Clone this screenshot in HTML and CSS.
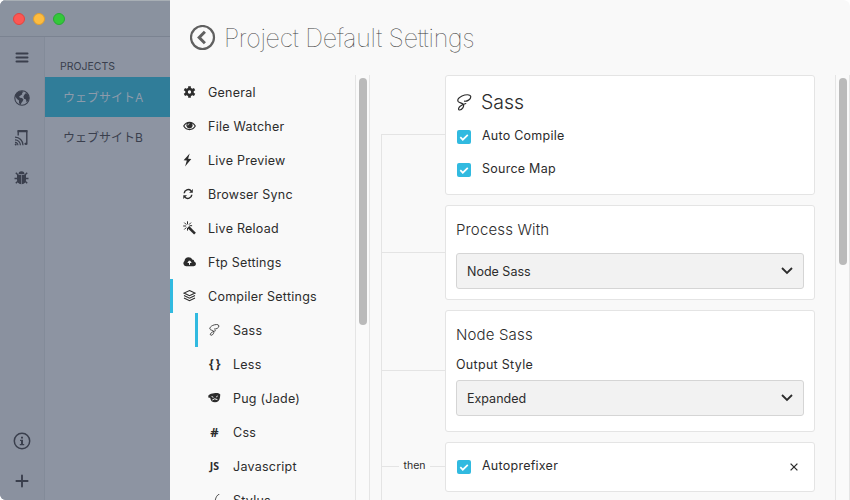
FILE: index.html
```html
<!DOCTYPE html>
<html lang="en">
<head>
<meta charset="utf-8">
<title>Project Default Settings</title>
<link rel="stylesheet" href="styles.css">
</head>
<body>
<svg class="defs" width="0" height="0">
  <symbol id="sass" viewBox="0 0 15 17"><path d="M7.500 7.200C10 7.500 13.800 5.500 13.800 2.800 13.500-.2 8 .6 5 2 2 3.500.3 5.500 1 7.200c.8 1.600 4 1.600 5.300 3.100C7.500 12.300 5 16 2.800 16 .8 16 1.500 13.300 3.500 12c1.500-1.100 3-1.700 5.300-2.500" fill="none" stroke="currentColor" stroke-width="1.200" stroke-linecap="round"/></symbol>
  <symbol id="chev" viewBox="0 0 12 8"><path d="M1 1l5 5 5-5" fill="none" stroke="currentColor" stroke-width="1.800"/></symbol>
  <symbol id="tick" viewBox="0 0 14 14"><path d="M3.300 7.200l2.500 2.500 5-4.800" fill="none" stroke="currentColor" stroke-width="1.700"/></symbol>
</svg>
<div class="window">
  <aside class="app">
    <div class="titlebar"><i class="dot red"></i><i class="dot yellow"></i><i class="dot green"></i></div>
    <div class="app-body">
      <div class="rail">
        <svg width="16" height="16" viewBox="0 0 16 16"><path d="M2.500 3.500h11M2.500 7.500h11M2.500 11.500h11" stroke="currentColor" stroke-width="2" stroke-linecap="round"/></svg>
        <svg width="16" height="16" viewBox="0 0 16 16"><circle cx="8" cy="8" r="7.200" fill="none" stroke="currentColor" stroke-width="1.100"/><path d="M1 6C2 3 4.500 1 8 .9L9.500 2 8 3l.3 1.200L6.500 5.500 5 6.700l1 1 2 .3 1.500 1.500-1 2-1 1.300L6.500 15 5 13V10.500L3 9zM10.500 4.500L12 3l2 1.500L15.200 8l-1 3-1.700 1.200-.5-2.700-2-.8-.6-2.200z" fill="currentColor"/></svg>
        <svg width="16" height="16" viewBox="0 0 16 16"><path d="M4.200 5.500V1.200h8.600v12.600H10.500" fill="none" stroke="currentColor" stroke-width="1.400"/><path d="M3.600 1.100h9.800M11 13.700h2" stroke="currentColor" stroke-width="2.100"/><path d="M1 7.200a8 8 0 0 1 8 8M1 9.800a5.400 5.400 0 0 1 5.400 5.400M1 12.300a2.800 2.800 0 0 1 2.900 2.900" fill="none" stroke="currentColor" stroke-width="1.200"/><circle cx="1.700" cy="14.600" r="1" fill="currentColor"/></svg>
        <svg width="16" height="16" viewBox="0 0 16 16"><path d="M4.500 4.300a3 3 0 0 1 6 0z" fill="currentColor"/><path d="M3 5H7.200v9.200C4.300 13.900 3 12 3 9.500zM7.800 5H12v4.500c0 2.500-1.300 4.400-4.200 4.700z" fill="currentColor"/><path d="M1.800 2.800L4.500 5.500M.5 8.500h3M1.800 13.300L4.300 10.800M13.200 2.800L10.500 5.500M14.500 8.500h-3M13.200 13.300L10.700 10.800" stroke="currentColor" stroke-width="1.400"/></svg>
        <span class="push"></span>
        <svg width="18" height="18" viewBox="0 0 18 18"><circle cx="9" cy="9" r="7.700" fill="none" stroke="currentColor" stroke-width="1.500"/><path d="M8 4.700h2v1.800H8zM7 7.800h3v4.300h1.200v1.200H6.800v-1.200H8V9H7z" fill="currentColor"/></svg>
        <svg width="14" height="14" viewBox="0 0 14 14"><path d="M7 1.400v11.200M1.400 7h11.200" stroke="currentColor" stroke-width="1.900" stroke-linecap="round"/></svg>
      </div>
      <div class="projects">
        <h2>PROJECTS</h2>
        <div class="project on">ウェブサイトA</div>
        <div class="project">ウェブサイトB</div>
      </div>
    </div>
  </aside>
  <main class="panel">
    <header>
      <svg width="26" height="26" viewBox="0 0 26 26"><circle cx="12.500" cy="12.500" r="11.500" fill="none" stroke="currentColor" stroke-width="2.200"/><path d="M14.900 6.800L9.200 12.500l5.700 5.700" fill="none" stroke="currentColor" stroke-width="3"/></svg>
      <h1>Project Default Settings</h1>
    </header>
    <div class="cols">
      <nav>
        <a><svg width="13" height="14" viewBox="0 0 14 14"><circle cx="7" cy="7" r="3.200" fill="none" stroke="currentColor" stroke-width="2.800"/><path d="M7 .7v2.500M7 10.800v2.500M1.500 3.900l2.200 1.200M10.300 8.900l2.200 1.200M1.500 10.100l2.200-1.200M10.300 5.100l2.200-1.200" stroke="currentColor" stroke-width="2.900"/></svg>General</a>
        <a><svg width="13" height="14" viewBox="0 0 14 14"><path d="M.8 7C3.900 1.900 10.100 1.900 13.200 7 10.100 12.100 3.900 12.100.8 7z" fill="none" stroke="currentColor" stroke-width="1.300"/><circle cx="7" cy="6.300" r="3.300" fill="currentColor"/><path d="M5.200 6.300A1.800 1.800 0 0 1 7 4.500" stroke="#f9f9f9" fill="none" stroke-width=".8"/></svg>File Watcher</a>
        <a><svg width="13" height="14" viewBox="0 0 13 14"><path d="M6.700.5L.6 7.300l3.200.3-1.700 5.900L8.300 6l-3.200-.3z" fill="currentColor"/></svg>Live Preview</a>
        <a><svg width="13" height="14" viewBox="0 0 13 14"><path d="M1.200 6.300A4 4 0 0 1 8 3.800M8.800 7.700A4 4 0 0 1 2 10.200" fill="none" stroke="currentColor" stroke-width="1.500"/><path d="M9.800 2v3.700H6.100zM.3 12V8.300H4z" fill="currentColor"/></svg>Browser Sync</a>
        <a><svg width="13" height="14" viewBox="0 0 13 14"><path d="M5.300 6L12 12.700" stroke="currentColor" stroke-width="2.500"/><path d="M4.500.3v3M.2 5h3M1.300 1.600l2 2M8 1.600l-2 2M1.300 8.500l2-2M4.500 7v2.600M6.500 4.700h2.600" stroke="currentColor" stroke-width="1"/></svg>Live Reload</a>
        <a><svg width="13" height="14" viewBox="0 0 13 14"><path d="M3.200 11.300A3 3 0 0 1 1.500 6C1.600 3.700 3.300 2.300 5.500 2.300 7.300 2.300 8.500 3.100 9.200 4.500c1.300 0 2 .9 2 2 2.600.8 2.200 4.800-.7 4.800z" fill="currentColor"/><path d="M6.500 9.800V6.500M4.900 7.500l1.600-1.700 1.600 1.700z" fill="#f9f9f9" stroke="#f9f9f9" stroke-width="1"/></svg>Ftp Settings</a>
        <a class="on"><svg width="13" height="14" viewBox="0 0 13 14"><path d="M6.500 1.500l5.500 2.600-5.500 2.600L1 4.100zM1 6.500l5.500 2.700L12 6.500M1 9l5.500 2.700L12 9" fill="none" stroke="currentColor" stroke-width="1.100"/></svg>Compiler Settings</a>
        <a class="sub on"><svg width="11" height="12"><use href="#sass"/></svg>Sass</a>
        <a class="sub"><b class="glyph braces">{ }</b>Less</a>
        <a class="sub"><svg width="13" height="12" viewBox="0 0 13 12"><path d="M.2 3.800C2 1.300 4 1.800 6 1.300c2-.6 4.500-.6 6.300 1.200L12 5.200c-.5 3.500-2 5-5 5.100-3 0-4.300-1.300-4.800-4.500L.5 5.700z" fill="currentColor"/><path d="M3.600 4.500l1.800.8M9.700 4l-1.500 1M4.300 8l2.400-1.200 2.700.8" stroke="#f9f9f9" stroke-width="1" fill="none"/></svg>Pug (Jade)</a>
        <a class="sub"><b class="glyph hash">#</b>Css</a>
        <a class="sub"><b class="glyph js">JS</b>Javascript</a>
        <a class="sub"><svg width="12" height="12" viewBox="0 0 12 12"><path d="M11 0C8.500 1 7.500 3 6.800 6L5 8 2.500 7 4 9.500" fill="none" stroke="currentColor" stroke-width=".8"/></svg>Stylus</a>
      </nav>
      <div class="scroll"><div class="thumb"></div></div>
      <div class="steps">
        <section class="step">
          <div class="wire"></div>
          <div class="card sass">
            <h3 class="big"><svg width="15" height="17"><use href="#sass"/></svg>Sass</h3>
            <label><span class="check"><svg width="14" height="14"><use href="#tick"/></svg></span>Auto Compile</label>
            <label><span class="check"><svg width="14" height="14"><use href="#tick"/></svg></span>Source Map</label>
          </div>
        </section>
        <section class="step">
          <div class="wire"></div>
          <div class="card process">
            <h3>Process With</h3>
            <div class="select">Node Sass<svg width="12" height="8"><use href="#chev"/></svg></div>
          </div>
        </section>
        <section class="step">
          <div class="wire"></div>
          <div class="card node">
            <h3>Node Sass</h3>
            <p>Output Style</p>
            <div class="select">Expanded<svg width="12" height="8"><use href="#chev"/></svg></div>
          </div>
        </section>
        <section class="step">
          <div class="wire then"><span>then</span></div>
          <div class="card prefixer">
            <label><span class="check"><svg width="14" height="14"><use href="#tick"/></svg></span>Autoprefixer</label>
            <svg width="8" height="8" viewBox="0 0 8 8"><path d="M.6.6l6.800 6.800M7.400.6L.6 7.400" stroke="currentColor" stroke-width="1.300"/></svg>
          </div>
        </section>
      </div>
      <div class="scroll main"><div class="thumb"></div></div>
    </div>
  </main>
</div>
</body>
</html>
```

FILE: styles.css
```css
* { box-sizing: border-box; }
body { margin: 0; background: #fff; font-family: Inter, "Noto Sans CJK JP", sans-serif; color: #2c2c2c; }
h1, h2, h3, p { margin: 0; font-weight: 400; }
svg { display: block; flex: none; }
.defs { position: absolute; }
.window { display: flex; width: 850px; height: 500px; overflow: hidden; border-radius: 6px 6px 0 6px; }
.app { width: 170px; display: flex; flex-direction: column; background: #8d94a2; color: #3a3f4d; }
.titlebar { height: 37px; display: flex; gap: 8px; align-items: center; padding-left: 13px; background: #8a929f; border-top: 1px solid #a8afb5; border-bottom: 1px solid #7b8391; }
.dot { width: 12px; height: 12px; border-radius: 50%; border: 1px solid; }
.red { background: #fc5753; border-color: #e2443f; }
.yellow { background: #fdbc40; border-color: #df9f2f; }
.green { background: #34c83a; border-color: #27aa35; }
.app-body { flex: 1; display: flex; min-height: 0; }
.rail { width: 45px; display: flex; flex-direction: column; align-items: center; gap: 24px; padding: 12.5px 0 12.5px; background: #8a919f; border-right: 1px solid #838b99; }
.rail svg { margin-left: .5px; }
.push { flex: 1; }
.projects { flex: 1; }
.projects h2 { height: 40px; padding: 22px 0 0 15px; font-size: 10.5px; line-height: 16px; letter-spacing: 0; }
.project { height: 40px; padding-left: 18px; font-size: 12px; line-height: 41px; white-space: nowrap; }
.project.on { background: #307d99; color: #8d9bab; }
.panel { flex: 1; display: flex; flex-direction: column; background: #f9f9f9; border-top-right-radius: 6px; min-width: 0; }
header { height: 75px; display: flex; align-items: center; gap: 8px; padding-left: 20px; color: #606060; flex: none; }
h1 { font-size: 25px; font-weight: 100; line-height: 32px; letter-spacing: -.3px; padding-top: 1px; color: #404040; }
.cols { flex: 1; display: flex; min-height: 0; }
nav { width: 185px; overflow: hidden; font-size: 12.5px; letter-spacing: .25px; }
nav a { height: 34px; display: flex; align-items: center; gap: 12px; padding-left: 10px; border-left: 3px solid transparent; }
nav a.on { border-color: #31bae0; }
nav a.sub { margin-left: 25px; gap: 0; }
nav a.sub > :first-child { width: 13px; margin-right: 12px; }
.glyph { font: 700 12px/12px "Open Sans", sans-serif; text-align: center; white-space: nowrap; letter-spacing: 0; }
.braces { letter-spacing: -.5px; }
.hash { font-size: 13px; }
.js { font-size: 10.5px; }
.scroll { width: 15px; border: solid #e5e5e5; border-width: 0 1px; padding: 3px 2px 0 3px; background: #fafafa; flex: none; }
.thumb { width: 8px; height: 247px; border-radius: 4px; background: #bababa; }
.main .thumb { height: 187px; }
.steps { flex: 1; position: relative; padding-left: 11px; overflow: hidden; }
.steps::before { content: ""; position: absolute; left: 11px; top: 59px; bottom: 0; width: 1px; background: #e4e4e4; }
.step { display: flex; margin: 0 20px 10px 0; }
.wire { width: 64px; align-self: center; height: 1px; margin-bottom: 1px; background: #e4e4e4; }
.then { display: flex; justify-content: center; align-items: center; padding-left: 3px; }
.then span { background: #f9f9f9; font-size: 10.5px; line-height: 20px; padding: 0 5px 1px; }
.card { flex: 1; background: #fff; border: 1px solid #e4e4e4; border-radius: 3px; padding: 0 10px; }
.sass { height: 120px; }
.big { display: flex; align-items: center; gap: 9px; height: 43px; }
h3.big { font-size: 19.5px; letter-spacing: 0; font-weight: 300; line-height: 28px; padding: 9px 0 0 1px; }
h3 { font-size: 15px; font-weight: 300; line-height: 20px; letter-spacing: .15px; padding-top: 14px; }
label { display: flex; align-items: center; gap: 11px; height: 33px; font-size: 12.5px; letter-spacing: .25px; line-height: 16px; }
.check { width: 14px; height: 14px; margin-left: 1px; border-radius: 2px; background: #31bae0; color: #fff; position: relative; top: 1px; }
.process { height: 95px; }
.process .select { margin-top: 13px; }
.node { height: 122px; }
.node p { font-size: 12.5px; line-height: 16px; letter-spacing: .3px; margin-top: 12px; }
.node .select { margin-top: 7px; }
.select { display: flex; justify-content: space-between; align-items: center; height: 36px; padding: 0 10px; border: 1px solid #d5d5d5; border-radius: 3px; background: #f2f2f2; font-size: 12.5px; letter-spacing: 0; }
.prefixer { height: 50px; display: flex; justify-content: space-between; align-items: center; padding-right: 16px; }
.prefixer label { padding-bottom: 2px; }
```
